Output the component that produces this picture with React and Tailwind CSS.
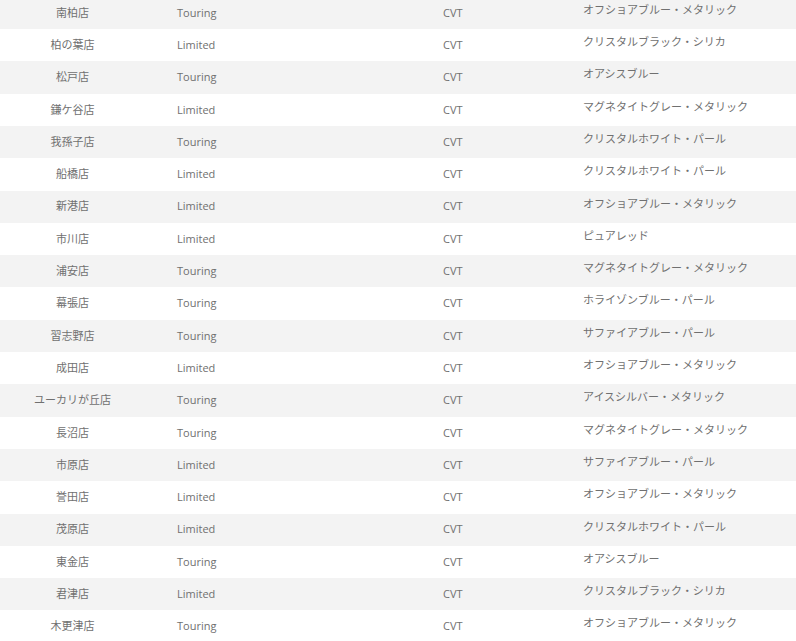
import React from "react";

const rows = [
  ["南柏店", "Touring", "オフショアブルー・メタリック"],
  ["柏の葉店", "Limited", "クリスタルブラック・シリカ"],
  ["松戸店", "Touring", "オアシスブルー"],
  ["鎌ケ谷店", "Limited", "マグネタイトグレー・メタリック"],
  ["我孫子店", "Touring", "クリスタルホワイト・パール"],
  ["船橋店", "Limited", "クリスタルホワイト・パール"],
  ["新港店", "Limited", "オフショアブルー・メタリック"],
  ["市川店", "Limited", "ピュアレッド"],
  ["浦安店", "Touring", "マグネタイトグレー・メタリック"],
  ["幕張店", "Touring", "ホライゾンブルー・パール"],
  ["習志野店", "Touring", "サファイアブルー・パール"],
  ["成田店", "Limited", "オフショアブルー・メタリック"],
  ["ユーカリが丘店", "Touring", "アイスシルバー・メタリック"],
  ["長沼店", "Touring", "マグネタイトグレー・メタリック"],
  ["市原店", "Limited", "サファイアブルー・パール"],
  ["誉田店", "Limited", "オフショアブルー・メタリック"],
  ["茂原店", "Limited", "クリスタルホワイト・パール"],
  ["東金店", "Touring", "オアシスブルー"],
  ["君津店", "Limited", "クリスタルブラック・シリカ"],
  ["木更津店", "Touring", "オフショアブルー・メタリック"],
];

export default function App() {
  return (
    <div className="w-[796px] h-[641px] overflow-hidden bg-white">
      <div className="-mt-[3.2px] text-[11px] text-[#707070] font-['Open_Sans','Noto_Sans_CJK_JP',sans-serif]">
        {rows.map((r, i) => (
          <div
            key={i}
            className={`flex h-[32.3px] ${i % 2 === 0 ? "bg-[#f3f3f3]" : "bg-white"}`}
          >
            <div className="w-[145px] flex items-center justify-center">{r[0]}</div>
            <div className="w-[32px]" />
            <div className="w-[266px] flex items-center">{r[1]}</div>
            <div className="w-[140px] flex items-center">CVT</div>
            <div className="flex-1 pt-[5px]">{r[2]}</div>
          </div>
        ))}
      </div>
    </div>
  );
}
